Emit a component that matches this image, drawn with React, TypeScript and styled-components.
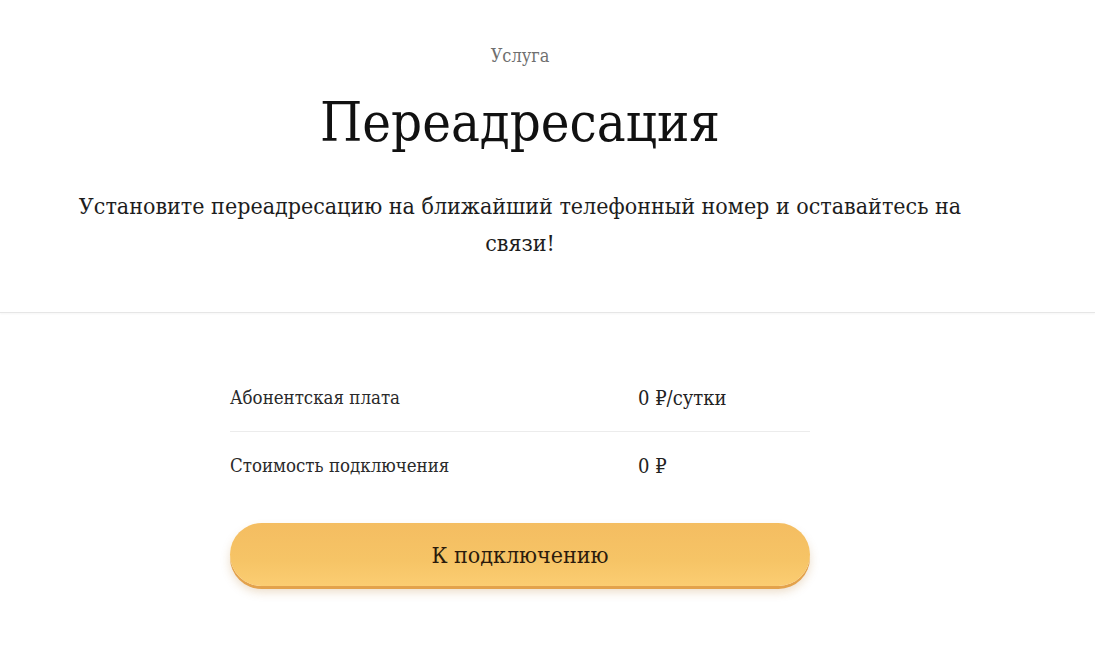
import styled, { createGlobalStyle } from 'styled-components'

const GlobalStyle = createGlobalStyle`
    html, body {
        margin:0;
        padding:0;
        background:#FFFFFF;
    }
    body {
        font-family: "DejaVu Serif Condensed", "DejaVu Serif", serif;
        color:#1a1a1a;
    }
`

const Page = styled.div`
    width:100%;
    min-height:646px;
    display:flex;
    flex-direction:column;
`

const Hero = styled.header`
    width:1040px;
    display:flex;
    flex-direction:column;
    align-items:center;
    padding-top:43px;
    padding-bottom:50px;
    border-bottom:1px solid #e6e6e6;
    box-shadow: 0 1px 2px rgba(0,0,0,0.04);
    box-sizing:content-box;
    padding-right:55px;
`

const Overline = styled.div`
    font-size:18px;
    line-height:26px;
    color:#6f6f6f;
`

const Title = styled.h1`
    margin:22px 0 0;
    font-size:54px;
    line-height:64px;
    font-weight:400;
    color:#111111;
`

const Lead = styled.p`
    margin:33px 0 0;
    width:900px;
    text-align:center;
    font-size:23px;
    line-height:37px;
    color:#1d1d1d;
`

const Content = styled.section`
    width:1040px;
    display:flex;
    flex-direction:column;
    align-items:center;
    padding-top:51px;
`

const Table = styled.div`
    width:580px;
    display:flex;
    flex-direction:column;
`

const Row = styled.div<{ $last?: boolean }>`
    display:grid;
    grid-template-columns:408px 1fr;
    align-items:center;
    height:67px;
    border-bottom:${p => p.$last ? 'none' : '1px solid #ececec'};
    font-size:18.5px;
    color:#2a2a2a;
`

const Value = styled.span`
    font-size:20px;
    color:#222222;
`

const ConnectButton = styled.button`
    margin-top:24px;
    width:580px;
    height:63px;
    border:none;
    border-radius:32px;
    background:linear-gradient(180deg, #f4bd61 0%, #f6c466 60%, #fbcd72 100%);
    box-shadow: 0 3px 0 #e3a24c, 0 6px 10px rgba(180,120,40,0.25);
    font-family: "DejaVu Serif Condensed", "DejaVu Serif", serif;
    font-size:23px;
    color:#2b1b0c;
    cursor:pointer;
`

const rows = [
    { label: 'Абонентская плата', value: '0 ₽/сутки' },
    { label: 'Стоимость подключения', value: '0 ₽' },
]

export default function App() {
    return <Page>
        <GlobalStyle />
        <Hero>
            <Overline>Услуга</Overline>
            <Title>Переадресация</Title>
            <Lead>Установите переадресацию на ближайший телефонный номер и оставайтесь на связи!</Lead>
        </Hero>
        <Content>
            <Table>
                {rows.map((row, index) =>
                    <Row key={'row-' + index} $last={index === rows.length - 1}>
                        <span>{row.label}</span>
                        <Value>{row.value}</Value>
                    </Row>
                )}
            </Table>
            <ConnectButton>К подключению</ConnectButton>
        </Content>
    </Page>
}
